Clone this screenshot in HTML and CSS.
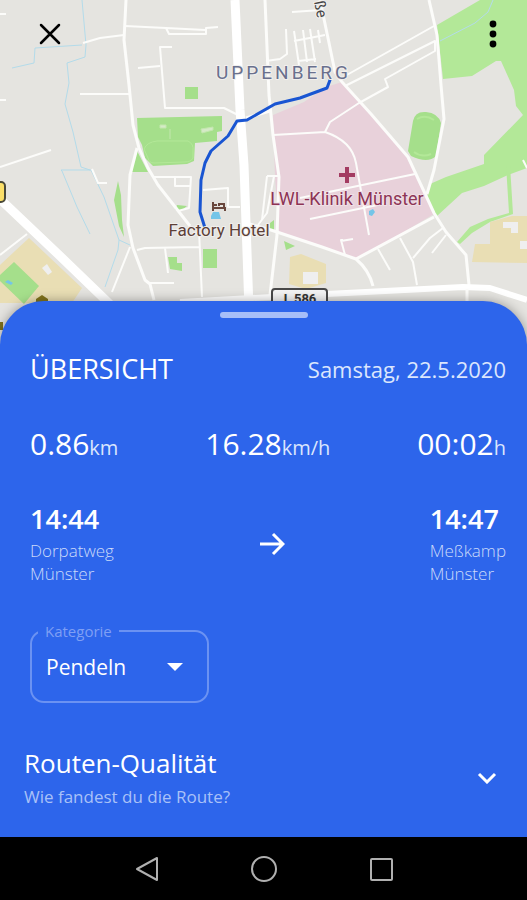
FILE: index.html
```
<!DOCTYPE html>
<html lang="de">
<head>
  <meta charset="UTF-8" />
  <meta name="viewport" content="width=device-width, initial-scale=1.0" />
  <title>Routenübersicht</title>
  <link rel="stylesheet" href="styles.css">
</head>
<body>
  <div class="map">
    <svg class="map-canvas" viewBox="0 0 527 345" preserveAspectRatio="xMidYMin slice" role="img" aria-label="Karte der Route">
      <!-- parks -->
      <g fill="#b3e898">
        <path d="M437 25L480 0H527V168L508 175L484 186L462 193L437 216L425 206L430 184L446 177L484 164V155L523 115L516 106L514 90L501 61H496L472 76L443 79Z"/>
        <path d="M510 165L513 214L490 222L472 233L460 244L457 242L470 227L488 219L509 213L506 165Z"/>
      </g>
      <g fill="#a5df8b">
        <path d="M137 118L222 116V131L217 132V141L195 143L194 161L187 164L153 166L145 158L142 145L138 137Z"/>
        <path d="M185 87h13v12h-13zM203 249h14v19h-14zM490 224h12v20h-12z"/>
        <path d="M136 149L148 172L132 172Z"/>
        <path d="M118 181L121 195L122 220L124 237L119 226L114 200Z"/>
        <path d="M168 257h9v6h5v8l-12-2zM177 205l10 1-5 4h-7zM270 223l4-3v10h-4zM284 241l11 5-9 4zM340 206l9-2-1 7h-8z"/>
        <path d="M413 121Q415 111 426 112Q438 113 441 123L436 156Q428 164 411 156L408 151Z"/>
      </g>
      <path d="M144 149Q147 142 157 141H188Q194 144 193 151V158Q191 162 184 162L154 163Q149 163 148 158Z" fill="none" stroke="#b3e898"/>
      <path d="M160 125h6v3h-6zM201 129l12-2v3l-11 3zM170 129v10" fill="#d5eac7" stroke="#c3e7ae"/>
      <path d="M417 119Q425 114 434 120M414 152Q422 158 431 154" fill="none" stroke="#b3e898" stroke-width="2"/>

      <!-- built-up areas -->
      <g fill="#e9deb4">
        <path d="M29 238L82 288L72 303H0V265Z"/>
        <path d="M290 257L301 254L326 264V283L306 289L289 284Z"/>
        <path d="M475 244h15v-22l22-6 15 0v47l-55-1z"/>
      </g>
      <path d="M14 262L39 286L24 304L0 281V275Z" fill="#a5df8b"/>
      <path d="M42 268l5-4 5 8-4 3zM303 272h15v12h-15zM503 222h15v11h-7v-5h-8zM520 241h7v8h-7z" fill="#efefef"/>
      <path d="M36 299l6-4 6 4v4H36zM0 322h3v8H0z" fill="#82741c"/>

      <!-- clinic grounds -->
      <path d="M273 115L304 102L326 87L342 82L371 114L408 157L434 214L392 239L356 259L322 246L279 232L275 177Z" fill="#e8d1da"/>

      <!-- streams -->
      <g fill="none" stroke="#b3dbea">
        <path d="M82 0L86 45L85 57L67 63L69 83L65 104L73 132L81 167L90 170"/>
        <path d="M12 68L34 63L35 48L82 45"/>
        <path d="M90 234L77 207L62 171L61 170H91L104 197L119 240L118 250L105 287M119 240L130 245"/>
        <path d="M440 41L475 23L488 12L493 0"/>
      </g>
      <path d="M211 216l2-4h6l2 7h-10zM369 211l4-2 2 3-3 4-3-1zM5 282l3-2 5 3-2 2z" fill="#74c5e8"/>

      <!-- side streets -->
      <g class="street">
        <path d="M83 43L100 38L124 35M125 26L166 28L169 34H206V28L218 27M166 28L205 30"/>
        <path d="M138 68L160 66M172 47H160L165 108H224L238 115M80 94H129M0 14H6M0 100H6"/>
        <path d="M0 167L51 150M0 255L27 234M92 169L98 183H107"/>
        <path d="M153 177H191L189 208L178 211M175 177V186H190M203 190L228 188V207H240"/>
        <path d="M137 250L145 248L199 247M165 248L168 273M130 247L112 292M148 283H174M199 230L202 297"/>
        <path d="M266 61L280 59L287 54L286 29M292 12L321 10M294 31L299 65M294 41L325 35M303 30L307 62M310 29L315 62M318 30L320 43M298 61L316 59"/>
        <path d="M273 135L325 132L330 122L359 103L388 87L385 79L435 51L435 41L345 86M345 76L434 26M325 132Q352 141 356 163L369 235"/>
        <path d="M300 198L415 174M310 219L387 203M343 240L341 240L345 255M341 241L353 239M378 249L390 270"/>
        <path d="M400 238L413 262L417 285M443 228L430 238L413 258M446 235L432 253M267 176H279M267 176L262 220"/>
        <path d="M258 225L267 213L274 176M523 160L527 168"/>
      </g>

      <!-- main streets -->
      <g class="road">
        <path d="M126 0L124 40L129 85L133 125L139 148L148 168L158 185L190 226"/>
        <path d="M137 148L130 175L128 225L133 248L145 280L150 284L154 300"/>
        <path d="M265 0L269 95L273 135L279 177L277 235L270 295"/>
        <path d="M320 0L328 38L335 72L342 82L371 114L408 157L434 213L446 232L466 255L469 285"/>
        <path d="M429 0L437 35L441 85L444 119L434 170L427 194"/>
        <path d="M246 223L271 230L322 247L356 259L434 217M356 259Q369 270 373 286M246 118L270 111"/>
      </g>
      <path class="highway" d="M0 199L60 256L118 312"/>
      <path class="highway" d="M235 0L240 110L244 165L249 310"/>
      <path class="highway thin" d="M180 302L327 294L463 287L490 288L527 300"/>
      <path class="road" d="M467 289V310"/>

      <!-- recorded route -->
      <path class="route" d="M205 228L200 212L201 180L205 163L211 151L228 136L237 121L247 120L275 104L300 98L327 88L330 80"/>

      <!-- labels -->
      <path d="M339 175H355M347 167V183" stroke="#a33b61" stroke-width="4"/>
      <g fill="none" stroke="#69473d" stroke-width="2">
        <path d="M213 202V211M213 208H225V211M213 205H217M219 206V204H224V207"/>
      </g>
      <text class="place" x="216" y="79">UPPENBERG</text>
      <text class="poi clinic" x="347" y="205" text-anchor="middle">LWL-Klinik Münster</text>
      <text class="poi hotel" x="219" y="236" text-anchor="middle">Factory Hotel</text>
      <text class="street-name" transform="translate(314 2) rotate(78)">ße</text>
      <rect x="272" y="289" width="55" height="20" rx="3" fill="#f4f4f4" stroke="#494949" stroke-width="2"/>
      <text class="road-number" x="300" y="303" text-anchor="middle">L 586</text>
      <rect x="-14" y="182" width="19" height="20" rx="4" fill="#fbdf68" stroke="#494939" stroke-width="2"/>
    </svg>

    <button class="map-button close" type="button" aria-label="Schließen">
      <svg width="24" height="24" viewBox="0 0 24 24"><path d="M3 3L21 21M21 3L3 21" stroke="#000" stroke-width="2.5" stroke-linecap="round"/></svg>
    </button>
    <button class="map-button more" type="button" aria-label="Mehr">
      <svg width="8" height="28" viewBox="0 0 8 28"><circle cx="4" cy="4" r="3.4"/><circle cx="4" cy="14" r="3.4"/><circle cx="4" cy="24" r="3.4"/></svg>
    </button>
  </div>

  <main class="sheet">
    <div class="handle"></div>

    <div class="overview">
      <div class="row heading">
        <h1>ÜBERSICHT</h1>
        <time datetime="2020-05-22">Samstag, 22.5.2020</time>
      </div>

      <div class="row stats">
        <div class="stat">0.86<span>km</span></div>
        <div class="stat">16.28<span>km/h</span></div>
        <div class="stat">00:02<span>h</span></div>
      </div>

      <div class="row trip">
        <div class="stop">
          <strong>14:44</strong>
          <p>Dorpatweg<br />Münster</p>
        </div>
        <svg width="26" height="24" viewBox="0 0 26 24"><path d="M1 12H24M14 2L24 12L14 22" fill="none" stroke="#fff" stroke-width="3"/></svg>
        <div class="stop">
          <strong>14:47</strong>
          <p>Meßkamp<br />Münster</p>
        </div>
      </div>

      <fieldset class="category">
        <legend><label for="category">Kategorie</label></legend>
        <select id="category">
          <option>Pendeln</option>
          <option>Freizeit</option>
        </select>
        <svg class="caret" width="16" height="8" viewBox="0 0 16 8"><path d="M0 0H16L8 8Z" fill="#fff"/></svg>
      </fieldset>
    </div>

    <button class="quality" type="button">
      <span class="quality-text">
        <span class="quality-title">Routen-Qualität</span>
        <span class="quality-hint">Wie fandest du die Route?</span>
      </span>
      <svg width="20" height="12" viewBox="0 0 20 12"><path d="M2 2L10 10L18 2" fill="none" stroke="#fff" stroke-width="3"/></svg>
    </button>
  </main>

  <nav class="navbar">
    <button type="button" aria-label="Zurück">
      <svg width="28" height="28" viewBox="0 0 28 28"><path d="M24 3V25L4 14Z"/></svg>
    </button>
    <button type="button" aria-label="Startseite">
      <svg width="28" height="28" viewBox="0 0 28 28"><circle cx="14" cy="14" r="12"/></svg>
    </button>
    <button type="button" aria-label="Letzte Apps">
      <svg width="28" height="28" viewBox="0 0 28 28"><rect x="4" y="4" width="21" height="21" rx="1"/></svg>
    </button>
  </nav>
</body>
</html>
```
FILE: styles.css
```
* {
  box-sizing: border-box;
}
body {
  display: flex;
  flex-direction: column;
  min-height: 100vh;
  margin: 0;
  background-color: #000;
  color: #fff;
  font-family: "Open Sans", "Noto Sans", sans-serif;
}
h1, p {
  margin: 0;
}
button {
  padding: 0;
  border: none;
  background: none;
  color: inherit;
  font-family: inherit;
  cursor: pointer;
}
svg {
  display: block;
}

/* map */
.map {
  position: relative;
  height: 345px;
  background-color: #e5e4e0;
}
.map-canvas {
  width: 100%;
  height: 100%;
}
.street, .road, .highway, .route {
  fill: none;
  stroke: #fcfcfa;
  stroke-linejoin: round;
}
.street {
  stroke-width: 2;
}
.road {
  stroke-width: 3;
}
.highway {
  stroke: #fff;
  stroke-width: 9;
}
.highway.thin {
  stroke-width: 6;
}
.route {
  stroke: #1955d2;
  stroke-width: 3;
  stroke-linecap: round;
}
.map-canvas text {
  font-family: Roboto, sans-serif;
  paint-order: stroke;
  stroke: #f1efed;
  stroke-width: 2px;
}
.map-canvas .place {
  font-size: 19px;
  letter-spacing: 3px;
  fill: #69708d;
}
.map-canvas .poi {
  font-size: 17px;
}
.map-canvas .clinic {
  font-size: 18px;
  fill: #8d3455;
  stroke: #efdfe5;
}
.map-canvas .hotel {
  fill: #5c4038;
}
.map-canvas .street-name {
  font-size: 15px;
  fill: #444;
}
.map-canvas .road-number {
  font-size: 13px;
  font-weight: bold;
  fill: #333;
}
.map-button {
  position: absolute;
  display: grid;
  place-items: center;
  top: 14px;
  width: 40px;
  height: 40px;
}
.close {
  left: 30px;
}
.more {
  right: 14px;
}

/* bottom sheet */
.sheet {
  position: relative;
  flex: 1;
  margin-top: -44px;
  padding: 11px 0 28px;
  border-radius: 44px 44px 0 0;
  background-color: #2d65eb;
  box-shadow: 0 0 12px rgba(0,0,0,0.35);
}
.handle {
  width: 88px;
  height: 6px;
  margin: 0 auto 35px;
  border-radius: 3px;
  background-color: #a6bef8;
}
.overview {
  padding: 0 21px 0 30px;
}
.row {
  display: flex;
  justify-content: space-between;
  align-items: center;
}
.heading {
  margin-bottom: 39px;
  line-height: 32px;
}
.heading h1 {
  font-size: 27px;
  font-weight: 500;
}
.heading time {
  font-size: 22px;
  color: #dbe6fd;
}
.stats {
  margin-bottom: 35px;
}
.stat {
  font-size: 30px;
  line-height: 40px;
}
.stat span {
  font-size: 20px;
  color: #dbe6fd;
}
.trip {
  margin-bottom: 38px;
}
.stop strong {
  display: block;
  margin-bottom: 4px;
  font-size: 27px;
  font-weight: 600;
  line-height: 32px;
}
.stop p {
  font-size: 17px;
  font-weight: 300;
  line-height: 23px;
  color: #cbdafa;
}
.category {
  position: relative;
  width: 179px;
  height: 80px;
  margin: 0;
  padding: 0 8px;
  border: 2px solid #6b92f2;
  border-radius: 14px;
}
.category legend {
  margin-left: -2px;
  padding: 0 7px;
  font-size: 15px;
  line-height: 16px;
  color: #7f9ff4;
}
.category select {
  width: 100%;
  height: 56px;
  padding: 0 6px;
  border: none;
  appearance: none;
  background: none;
  color: #fff;
  font-family: inherit;
  font-size: 21px;
}
.category option {
  color: #222;
}
.caret {
  position: absolute;
  top: 24px;
  right: 24px;
  pointer-events: none;
}
.quality {
  display: flex;
  justify-content: space-between;
  align-items: center;
  width: 100%;
  margin-top: 44px;
  padding: 0 30px 0 24px;
  text-align: left;
}
.quality-text {
  display: flex;
  flex-direction: column;
  gap: 6px;
}
.quality-title {
  font-size: 26px;
  font-weight: 500;
  line-height: 32px;
}
.quality-hint {
  font-size: 17px;
  line-height: 24px;
  color: #a9c1f8;
}

/* system navigation */
.navbar {
  display: flex;
  justify-content: center;
  align-items: center;
  gap: 89px;
  height: 64px;
  background-color: #000;
}
.navbar svg {
  fill: none;
  stroke: #b0b0b0;
  stroke-width: 2;
  stroke-linejoin: round;
}
```
